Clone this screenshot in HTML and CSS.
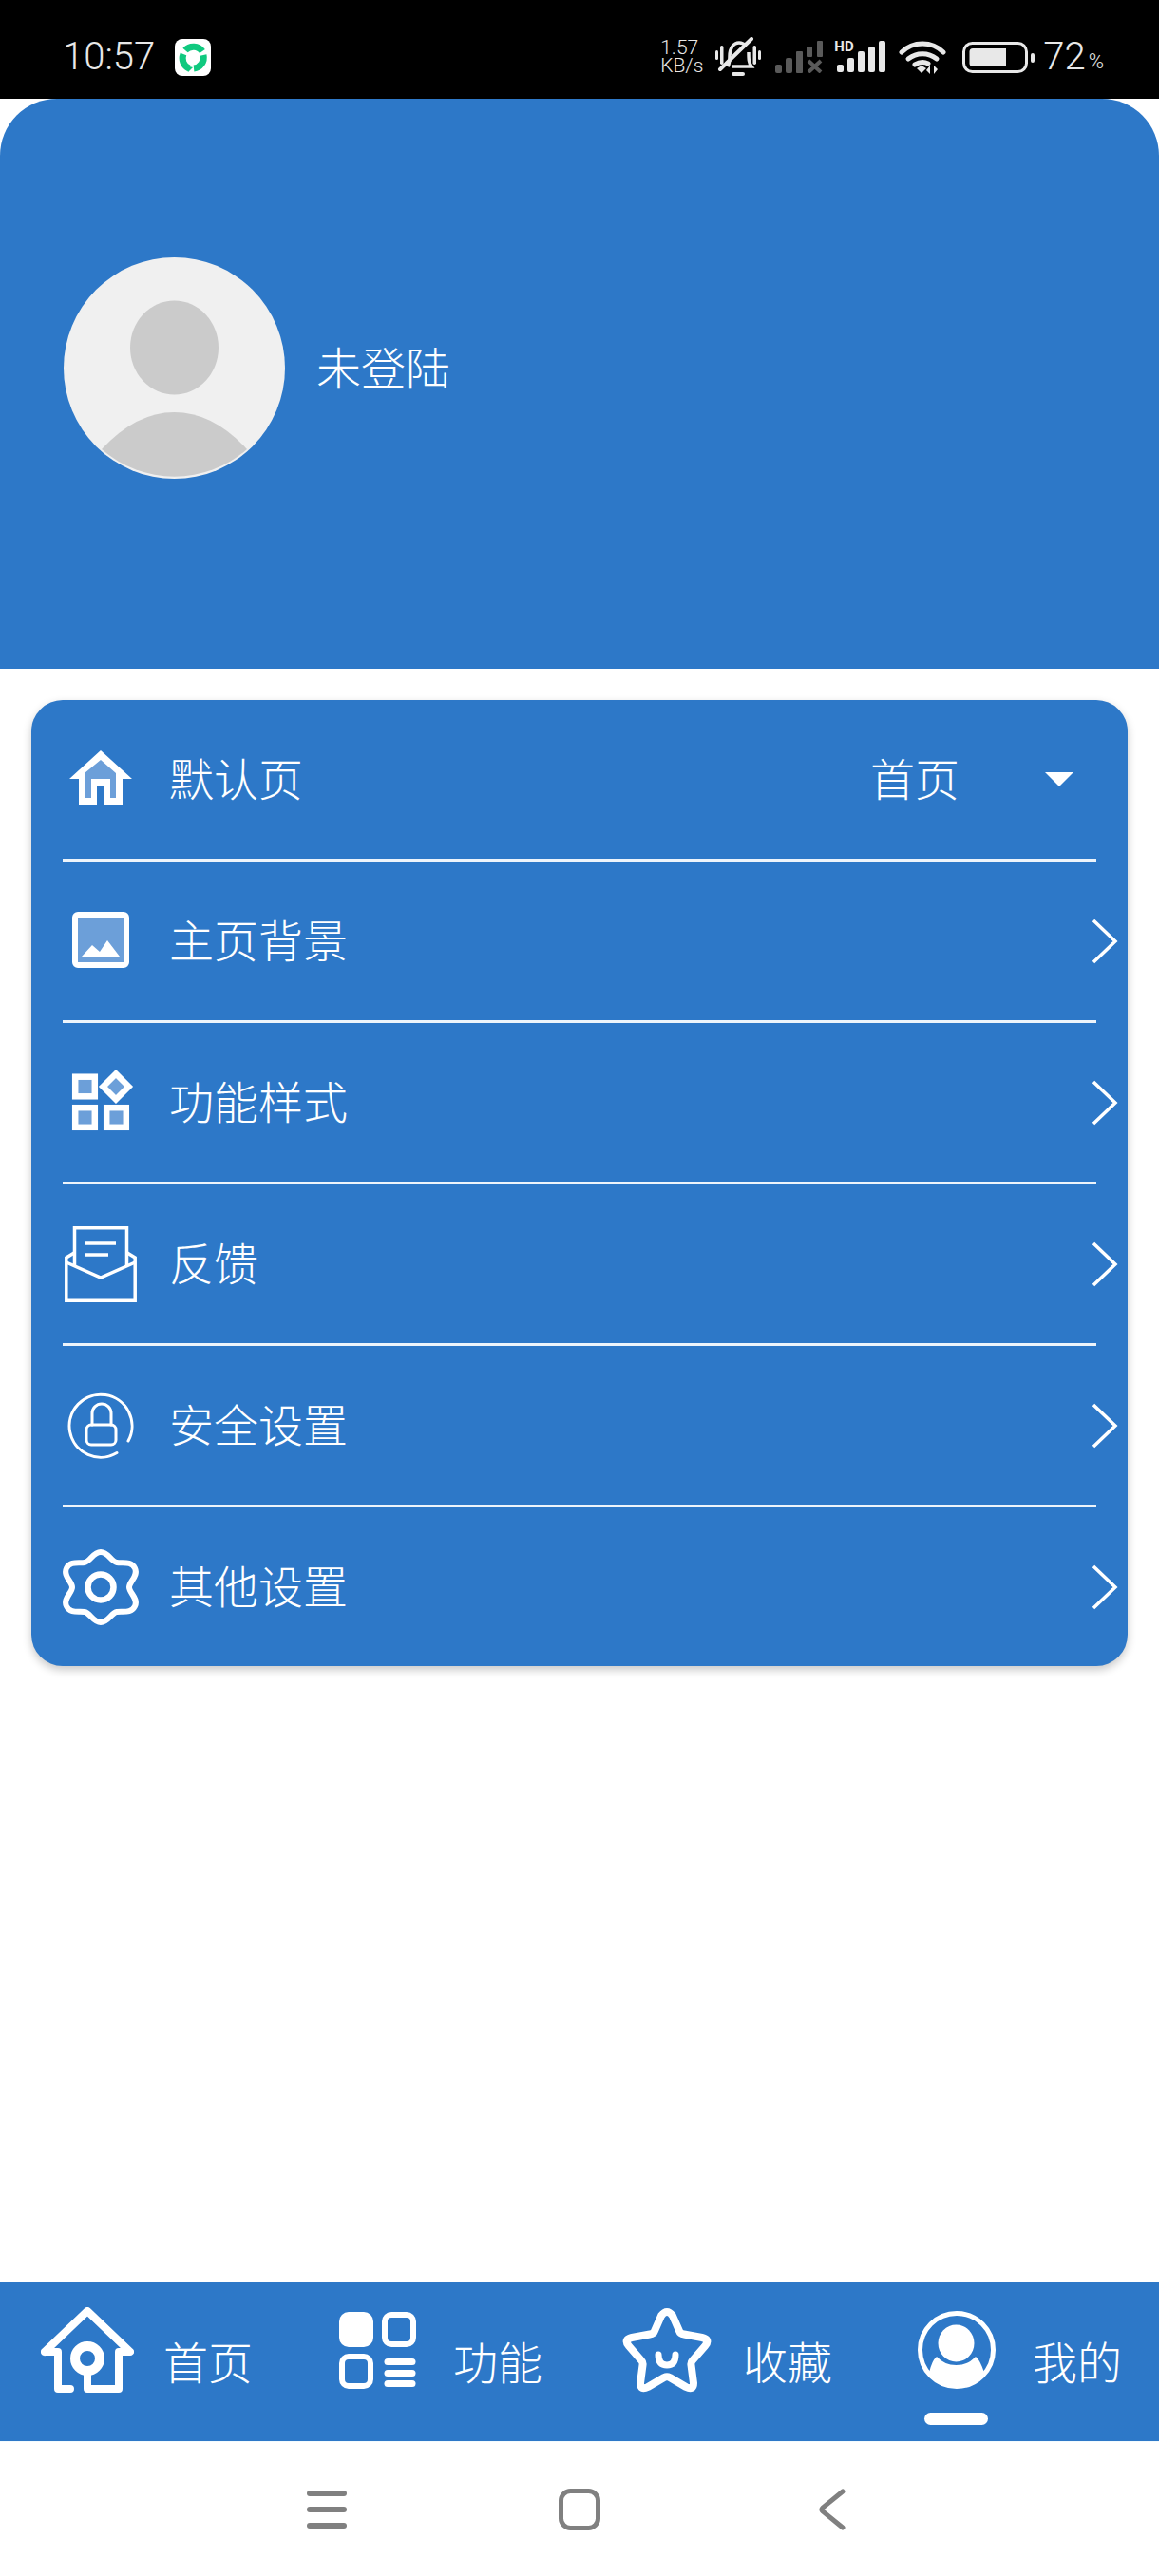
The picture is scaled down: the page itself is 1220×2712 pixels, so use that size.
FILE: index.html
```html
<!DOCTYPE html>
<html lang="zh-CN">
<head>
  <meta charset="UTF-8">
  <meta name="viewport" content="width=device-width, initial-scale=1.0">
  <title>我的</title>
  <link rel="stylesheet" href="styles.css">
</head>
<body>
  <div class="page">
    <div class="status-bar">
      <span class="status-time">10:57</span>
      <svg class="status-app" width="38" height="39" viewBox="0 0 38 39">
        <rect width="38" height="39" rx="8" fill="#fff"/>
        <g fill="none" stroke="#10c97f" stroke-width="7">
          <path d="M11 12A11.500 11.500 0 0 1 29 13"/>
          <path d="M30 17A11.500 11.500 0 0 1 20 31"/>
          <path d="M15 31A11.500 11.500 0 0 1 9 16"/>
        </g>
        <path d="M12 28l7 2-5 5z" fill="#10c97f"/>
      </svg>
      <div class="status-speed"><span>1.57</span><span>KB/s</span></div>
      <svg class="status-bell" width="48" height="42" viewBox="0 0 48 42">
        <g fill="#e8e8e8">
          <rect x="0" y="14" width="3" height="10" rx="1.5"/>
          <rect x="5" y="9" width="3.5" height="20" rx="1.7"/>
          <rect x="39.500" y="9" width="3.5" height="20" rx="1.7"/>
          <rect x="45" y="14" width="3" height="10" rx="1.500"/>
          <rect x="17" y="37" width="14" height="4" rx="2"/>
        </g>
        <path d="M13 31c2-3 2-6 2-11 0-8 4-14 10-14 3 0 5 1 7 3M35 16c0 7 0 11 3 15H17" fill="none" stroke="#e8e8e8" stroke-width="3.500"/>
        <path d="M5 34L38 2" stroke="#e8e8e8" stroke-width="4" stroke-linecap="round"/>
      </svg>
      <svg class="status-sim" width="51" height="34" viewBox="0 0 51 34">
        <g fill="#5a5a5a">
          <rect x="0" y="25" width="7" height="9" rx="2"/>
          <rect x="11" y="18" width="7" height="16" rx="2"/>
          <rect x="22" y="11" width="7" height="23" rx="1"/>
          <rect x="33" y="6" width="6" height="11" rx="1"/>
          <rect x="44" y="0" width="6" height="17" rx="1"/>
        </g>
        <path d="M35 21l13 12M48 21L35 33" stroke="#5a5a5a" stroke-width="4"/>
      </svg>
      <div class="status-hd">
        <span class="hd-label">HD</span>
        <svg width="54" height="33" viewBox="0 0 54 33">
          <g fill="#e8e8e8">
            <rect x="3" y="25" width="7" height="8" rx="2"/>
            <rect x="14" y="18" width="7" height="15" rx="2"/>
            <rect x="25" y="11" width="7" height="22" rx="2"/>
            <rect x="36" y="6" width="7" height="27" rx="2"/>
            <rect x="47" y="0" width="7" height="33" rx="2"/>
          </g>
        </svg>
      </div>
      <svg class="status-wifi" width="50" height="38" viewBox="0 0 50 38">
        <g fill="none" stroke="#e8e8e8" stroke-width="5" stroke-linecap="round">
          <path d="M3 14C15 2 35 2 47 14"/>
          <path d="M10 21c9-7 21-7 30 0"/>
          <path d="M17 27c5-3 10-3 14-1"/>
        </g>
        <path d="M19 31l5-3 5 3-5 5z" fill="#e8e8e8"/>
        <path d="M33 37v-9l-4 5zM37 28v9l4-5z" fill="#e8e8e8"/>
      </svg>
      <svg class="status-battery" width="76" height="33" viewBox="0 0 76 33">
        <rect x="1.500" y="1.500" width="66" height="30" rx="9" fill="none" stroke="#e8e8e8" stroke-width="3"/>
        <path d="M11 7h35v19H11a3.500 3.500 0 0 1-3.500-3.500v-12A3.500 3.500 0 0 1 11 7z" fill="#e8e8e8"/>
        <rect x="72" y="12" width="4" height="10" rx="2" fill="#e8e8e8"/>
      </svg>
      <span class="status-level">72</span><span class="status-percent">%</span>
    </div>

    <header class="profile">
      <svg class="avatar" width="233" height="233" viewBox="0 0 233 233">
        <circle cx="116.500" cy="116.500" r="116.500" fill="#f0f0f0"/>
        <ellipse cx="116.500" cy="95" rx="46.500" ry="49.500" fill="#cbcbcb"/>
        <path d="M40 202Q76 163 116.500 163T193 202A116.500 116.500 0 0 1 40 202Z" fill="#cbcbcb"/>
      </svg>
      <span class="profile-name">未登陆</span>
    </header>

    <main class="content">
      <section class="menu-card">
        <div class="menu-row">
          <svg class="menu-icon" width="80" height="80" viewBox="0 0 80 80">
            <g transform="translate(7 9)">
              <path d="M33 0L66 30H56V57H37V37H29V57H10V30H0Z" fill="#fff"/>
              <path d="M33 10L49 24V50H43V30H23V50H16V24Z" fill="#6c9fd9"/>
            </g>
          </svg>
          <span class="menu-label">默认页</span>
          <span class="menu-value">首页</span>
          <span class="menu-caret"></span>
        </div>
        <div class="menu-line"></div>
        <div class="menu-row">
          <svg class="menu-icon" width="80" height="80" viewBox="0 0 80 80">
            <g transform="translate(10 9)">
              <rect x="3" y="3" width="54" height="53" rx="3" fill="#6c9fd9" stroke="#fff" stroke-width="6"/>
              <path d="M10 47L21 35L29 42L37 30L50 47Z" fill="#fff"/>
            </g>
          </svg>
          <span class="menu-label">主页背景</span>
          <svg class="menu-chevron" width="28" height="48" viewBox="0 0 28 48"><path d="M2 2L25 24L2 46" fill="none" stroke="#fff" stroke-width="3.500"/></svg>
        </div>
        <div class="menu-line"></div>
        <div class="menu-row">
          <svg class="menu-icon" width="80" height="80" viewBox="0 0 80 80">
            <g transform="translate(10 5)" fill="#6c9fd9" stroke="#fff" stroke-width="6.500">
              <rect x="3.200" y="7.700" width="20.600" height="20.600"/>
              <path d="M46 4.500L59.500 18L46 31.500L32.500 18Z"/>
              <rect x="3.200" y="40.200" width="20.600" height="20.600"/>
              <rect x="36.200" y="40.200" width="20.600" height="20.600"/>
            </g>
          </svg>
          <span class="menu-label">功能样式</span>
          <svg class="menu-chevron" width="28" height="48" viewBox="0 0 28 48"><path d="M2 2L25 24L2 46" fill="none" stroke="#fff" stroke-width="3.500"/></svg>
        </div>
        <div class="menu-line"></div>
        <div class="menu-row">
          <svg class="menu-icon" width="80" height="80" viewBox="0 0 80 80">
            <g transform="translate(2 0)" fill="none" stroke="#fff" stroke-width="3.500">
              <path d="M10 28L1.800 33V78.200H74.200V33L66 28"/>
              <path d="M1.800 38L38 54L74.200 38"/>
              <path d="M10.500 41V1.800H65.500V41"/>
              <path d="M22 18H54M22 30H46"/>
            </g>
          </svg>
          <span class="menu-label">反馈</span>
          <svg class="menu-chevron" width="28" height="48" viewBox="0 0 28 48"><path d="M2 2L25 24L2 46" fill="none" stroke="#fff" stroke-width="3.500"/></svg>
        </div>
        <div class="menu-line"></div>
        <div class="menu-row">
          <svg class="menu-icon" width="80" height="80" viewBox="0 0 80 80">
            <g transform="translate(5 5)" fill="none" stroke="#fff" stroke-width="3" stroke-linecap="round">
              <path d="M64 51A33 33 0 1 0 52 63.500"/>
              <rect x="20" y="34" width="31" height="21" rx="5"/>
              <path d="M26 34V22a10 10 0 0 1 20 0V34"/>
            </g>
          </svg>
          <span class="menu-label">安全设置</span>
          <svg class="menu-chevron" width="28" height="48" viewBox="0 0 28 48"><path d="M2 2L25 24L2 46" fill="none" stroke="#fff" stroke-width="3.500"/></svg>
        </div>
        <div class="menu-line"></div>
        <div class="menu-row">
          <svg class="menu-icon" width="80" height="80" viewBox="0 0 80 80">
            <g fill="none" stroke="#fff" stroke-width="6">
              <path d="M23 14C29 13 32 3 40 3S51 13 57 14S72 12 76 20S70 34 70 40S80 52 76 60S63 65 57 66S48 77 40 77S29 67 23 66S8 68 4 60S10 46 10 40S0 28 4 20S17 15 23 14Z"/>
              <circle cx="40" cy="40" r="13.500" stroke-width="6.500"/>
            </g>
          </svg>
          <span class="menu-label">其他设置</span>
          <svg class="menu-chevron" width="28" height="48" viewBox="0 0 28 48"><path d="M2 2L25 24L2 46" fill="none" stroke="#fff" stroke-width="3.500"/></svg>
        </div>
      </section>
    </main>

    <nav class="tab-bar">
      <div class="tab">
        <div class="tab-icon">
          <svg width="98" height="90" viewBox="0 0 98 90">
            <g fill="none" stroke="#fff" stroke-width="8" stroke-linecap="round" stroke-linejoin="round">
              <path d="M4 47L49 4L94 47H82V86H49V70M18 47V86H31M4 47H18"/>
              <circle cx="49" cy="54" r="13" stroke-width="10"/>
            </g>
          </svg>
        </div>
        <span class="tab-label">首页</span>
      </div>
      <div class="tab">
        <div class="tab-icon">
          <svg width="81" height="81" viewBox="0 0 81 81">
            <rect width="36" height="37" rx="10" fill="#fff"/>
            <rect x="48" y="3" width="30" height="31" rx="7" fill="none" stroke="#fff" stroke-width="6"/>
            <rect x="3" y="47" width="30" height="31" rx="7" fill="none" stroke="#fff" stroke-width="6"/>
            <rect x="47.500" y="49" width="33" height="7" rx="3.500" fill="#fff"/>
            <rect x="47.500" y="61" width="33" height="7" rx="3.500" fill="#fff"/>
            <rect x="47.500" y="72" width="33" height="7" rx="3.500" fill="#fff"/>
          </svg>
        </div>
        <span class="tab-label">功能</span>
      </div>
      <div class="tab">
        <div class="tab-icon">
          <svg width="94" height="94" viewBox="0 0 94 94">
            <path d="M41 11Q47 3 53 11L60 27Q61 30 65 30.500L84 34Q93 36 87 43L74 58Q72 60 72.500 63L75 82Q75 90 67 86L50 76Q47 74.500 44 76L27 86Q19 90 19 82L21.500 63Q22 60 20 58L7 43Q1 36 10 34L29 30.500Q33 30 34 27Z" fill="none" stroke="#fff" stroke-width="8" stroke-linejoin="round"/>
            <path d="M38 52Q38 63 47 63Q56 63 56 52" fill="none" stroke="#fff" stroke-width="7" stroke-linecap="round"/>
          </svg>
        </div>
        <span class="tab-label">收藏</span>
      </div>
      <div class="tab tab-active">
        <div class="tab-icon">
          <svg width="82" height="82" viewBox="0 0 82 82">
            <circle cx="41" cy="41" r="38.500" fill="none" stroke="#fff" stroke-width="5"/>
            <ellipse cx="40.500" cy="34" rx="19" ry="19.500" fill="#fff"/>
            <path d="M12 65Q15 52 20 48Q28 57 40.500 57Q53 57 61 48Q66 52 70 65A38 38 0 0 1 12 65Z" fill="#fff"/>
          </svg>
        </div>
        <span class="tab-label">我的</span>
      </div>
    </nav>

    <div class="system-nav">
      <div class="system-key">
        <div class="system-menu"><span></span><span></span><span></span></div>
      </div>
      <div class="system-key">
        <svg width="44" height="44" viewBox="0 0 44 44"><rect x="2.500" y="2.500" width="39" height="39" rx="10" fill="none" stroke="#808080" stroke-width="5"/></svg>
      </div>
      <div class="system-key">
        <svg width="28" height="44" viewBox="0 0 28 44"><path d="M25 3L4 20Q2 22 4 24L25 41" fill="none" stroke="#808080" stroke-width="5" stroke-linecap="round"/></svg>
      </div>
    </div>
  </div>
</body>
</html>
```

FILE: styles.css
```css
* {
  box-sizing: border-box;
}
body {
  margin: 0;
  background: #fff;
  color: #fff;
  font-family: "Noto Sans CJK SC", "Noto Sans", sans-serif;
  font-weight: 300;
}
svg {
  display: block;
  flex: none;
}
.page {
  display: flex;
  flex-direction: column;
  width: 1220px;
  height: 2712px;
  background: #fff;
}

/* status bar */
.status-bar {
  display: flex;
  align-items: center;
  height: 104px;
  padding: 16px 58px 0 66px;
  background: #000;
  color: #e8e8e8;
  font-family: Roboto, sans-serif;
  font-weight: 300;
}
.status-time {
  font-size: 40px;
  line-height: 44px;
  width: 118px;
}
.status-speed {
  display: flex;
  flex-direction: column;
  margin-left: auto;
  font-size: 21px;
  line-height: 19px;
}
.status-bell {
  margin-left: 13px;
}
.status-sim {
  margin-left: 15px;
}
.status-hd {
  position: relative;
  margin-left: 11px;
  margin-top: 0;
  width: 54px;
  height: 34px;
}
.hd-label {
  position: absolute;
  left: 0;
  top: -1px;
  font-size: 15px;
  line-height: 15px;
  font-weight: 700;
  background: #000;
  padding-right: 1px;
}
.status-wifi {
  margin-left: 14px;
}
.status-battery {
  margin-left: 17px;
}
.status-level {
  margin-left: 9px;
  font-size: 40px;
  line-height: 44px;
}
.status-percent {
  margin-left: 3px;
  margin-top: 10px;
  font-size: 22px;
  line-height: 26px;
}

/* blue profile header */
.profile {
  display: flex;
  align-items: center;
  gap: 33px;
  height: 600px;
  padding: 0 0 33px 67px;
  background: #2d78c8;
  border-radius: 60px 60px 0 0;
}
.profile-name {
  font-size: 47px;
  line-height: 60px;
  padding-bottom: 6px;
}

/* settings list */
.content {
  flex: 1;
  padding: 33px 33px 0;
}
.menu-card {
  background: #2d78c8;
  border-radius: 33px;
  box-shadow: 0 4px 10px rgba(0, 0, 0, 0.22);
}
.menu-row {
  display: flex;
  align-items: center;
  height: 167px;
  padding: 0 10px 0 33px;
}
.menu-line {
  height: 3px;
  margin: 0 33px;
  background: #edf4fb;
}
.menu-icon {
  margin-right: 32px;
}
.menu-label {
  flex: 1;
  font-size: 47px;
  line-height: 60px;
  padding-bottom: 5px;
}
.menu-value {
  font-size: 47px;
  line-height: 60px;
  padding-bottom: 5px;
  margin-right: 90px;
}
.menu-caret {
  width: 0;
  height: 0;
  margin-right: 47px;
  border-left: 15px solid transparent;
  border-right: 15px solid transparent;
  border-top: 15px solid #fff;
}

/* bottom tabs */
.tab-bar {
  display: grid;
  grid-template-columns: repeat(4, 305px);
  height: 167px;
  background: #2d78c8;
}
.tab {
  display: flex;
  align-items: center;
  padding-left: 32px;
}
.tab-icon {
  position: relative;
  display: flex;
  justify-content: center;
  align-items: center;
  width: 120px;
  height: 132px;
  padding-bottom: 25px;
  margin-right: 20px;
}
.tab-active .tab-icon::after {
  content: "";
  position: absolute;
  left: 26px;
  bottom: 0;
  width: 67px;
  height: 13px;
  border-radius: 7px;
  background: #fff;
}
.tab-label {
  font-size: 47px;
  line-height: 60px;
  padding-bottom: 3px;
}

/* android keys */
.system-nav {
  display: flex;
  justify-content: center;
  align-items: center;
  height: 142px;
  border-top: 1px solid #f2fbff;
}
.system-key {
  display: flex;
  justify-content: center;
  width: 266px;
}
.system-menu {
  display: flex;
  flex-direction: column;
  gap: 11px;
  width: 42px;
}
.system-menu span {
  height: 6px;
  border-radius: 3px;
  background: #808080;
}
```
